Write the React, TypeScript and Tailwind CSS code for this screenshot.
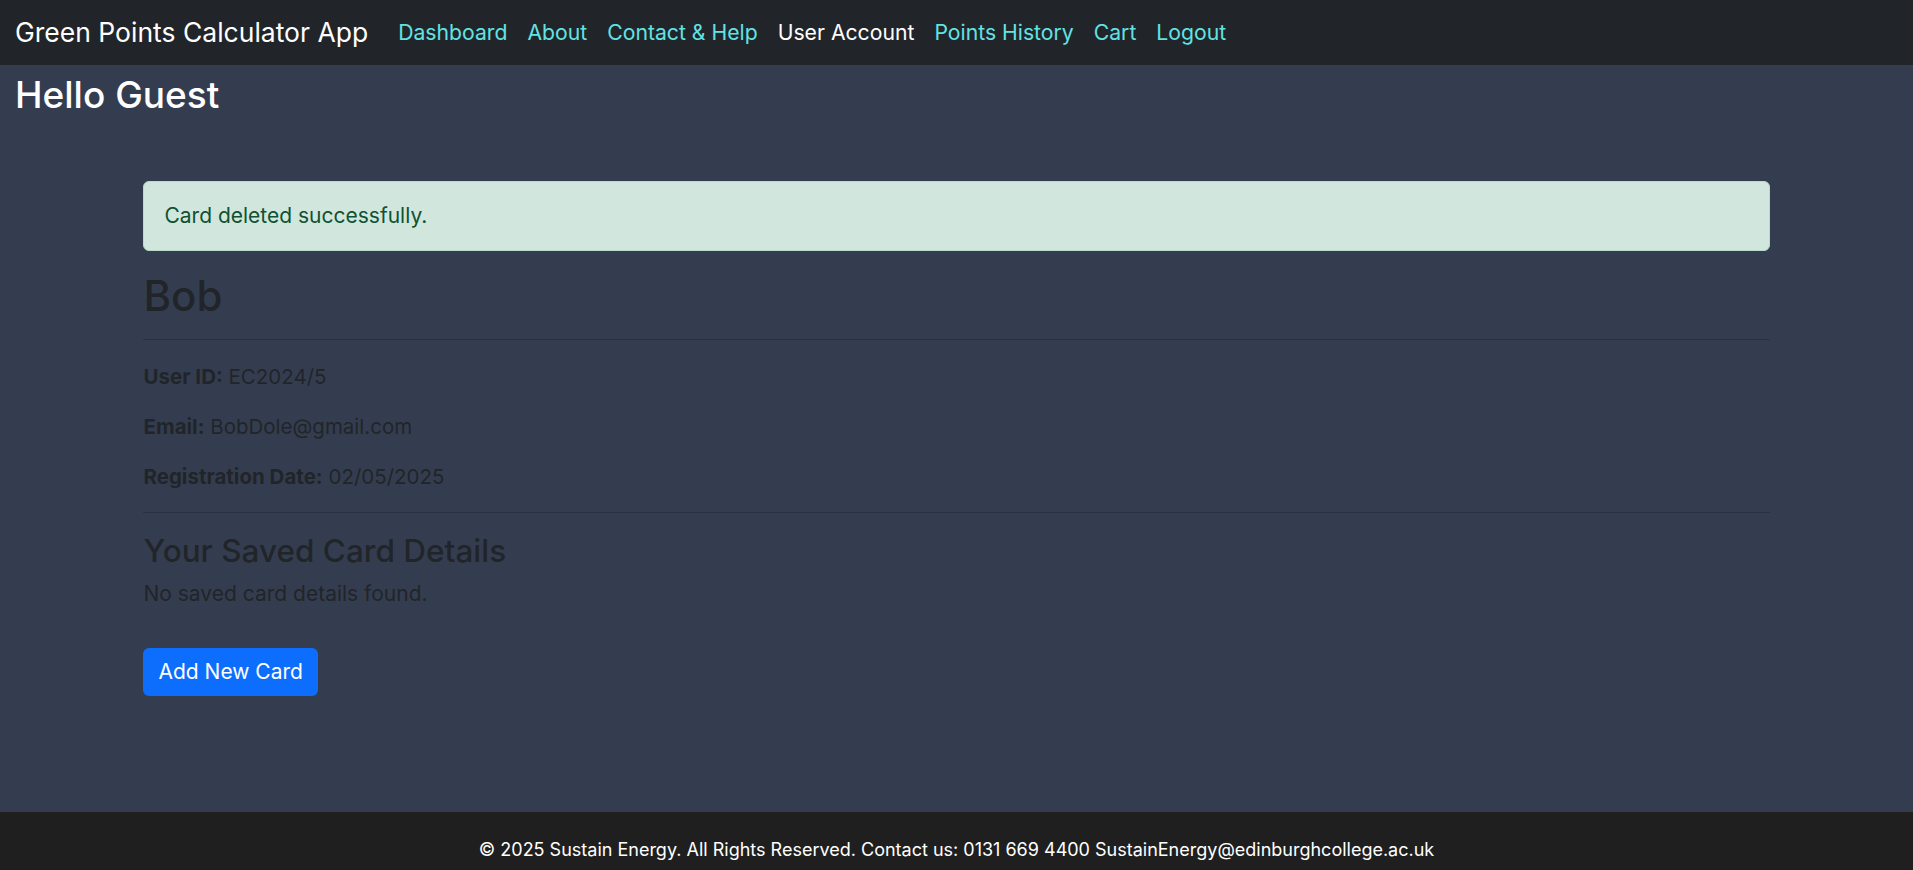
import React from "react";

const navLinks = [
	{ label: "Dashboard", active: false },
	{ label: "About", active: false },
	{ label: "Contact & Help", active: false },
	{ label: "User Account", active: true },
	{ label: "Points History", active: false },
	{ label: "Cart", active: false },
	{ label: "Logout", active: false },
];

const details = [
	{ label: "User ID:", value: "EC2024/5" },
	{ label: "Email:", value: "BobDole@gmail.com" },
	{ label: "Registration Date:", value: "02/05/2025" },
];

const App = () => {
	return (
		<div
			className="min-h-screen flex flex-col bg-[#343d4f] text-[#212529]"
			style={{ fontFamily: "Inter, 'Open Sans', sans-serif" }}
		>
			<nav className="h-[65px] bg-[#212529] flex items-center px-[15px]">
				<span className="text-[26.5px] text-white mr-[20px]">
					Green Points Calculator App
				</span>
				<ul className="flex items-center">
					{navLinks.map(({ label, active }) => (
						<li key={label}>
							<a
								href="#"
								className={
									active
										? "block px-[10px] text-[21.2px] text-white"
										: "block px-[10px] text-[21.2px] text-[#62e3e3]"
								}
							>
								{label}
							</a>
						</li>
					))}
				</ul>
			</nav>

			<main className="flex-1 pb-[108px]">
				<h2 className="px-[15px] pt-[8px] text-[37px] leading-[1.2] font-medium text-white">
					Hello Guest
				</h2>

				<div className="w-[85%] mx-auto mt-[64px]">
					<div className="rounded-[6px] border border-[#badbcc] bg-[#d1e7dd] px-[20px] py-[19px] text-[21px] leading-[30px] text-[#0f5132] mb-[21px]">
						Card deleted successfully.
					</div>

					<h2 className="text-[42px] leading-[48px] font-medium">Bob</h2>
					<hr className="mt-[19px] mb-[22px] border-t border-[#2a3140]" />

					{details.map(({ label, value }) => (
						<p key={label} className="text-[20.5px] leading-[30px] mb-[20px]">
							<strong className="font-bold">{label}</strong> {value}
						</p>
					))}

					<hr className="mb-[20px] border-t border-[#2a3140]" />

					<h3 className="text-[31.5px] leading-[36px] font-medium mb-[10px]">
						Your Saved Card Details
					</h3>
					<p className="text-[21px] leading-[30px]">
						No saved card details found.
					</p>

					<button className="mt-[39px] rounded-[6px] bg-[#0d6efd] px-[15px] py-[9px] text-[21px] leading-[30px] text-white">
						Add New Card
					</button>
				</div>
			</main>

			<footer className="bg-[#1f1f1f] pt-[24px] pb-[6px] text-center text-[18px] leading-[28px] text-white">
				© 2025 Sustain Energy. All Rights Reserved. Contact us: 0131 669 4400
				SustainEnergy@edinburghcollege.ac.uk
			</footer>
		</div>
	);
};

export default App;
